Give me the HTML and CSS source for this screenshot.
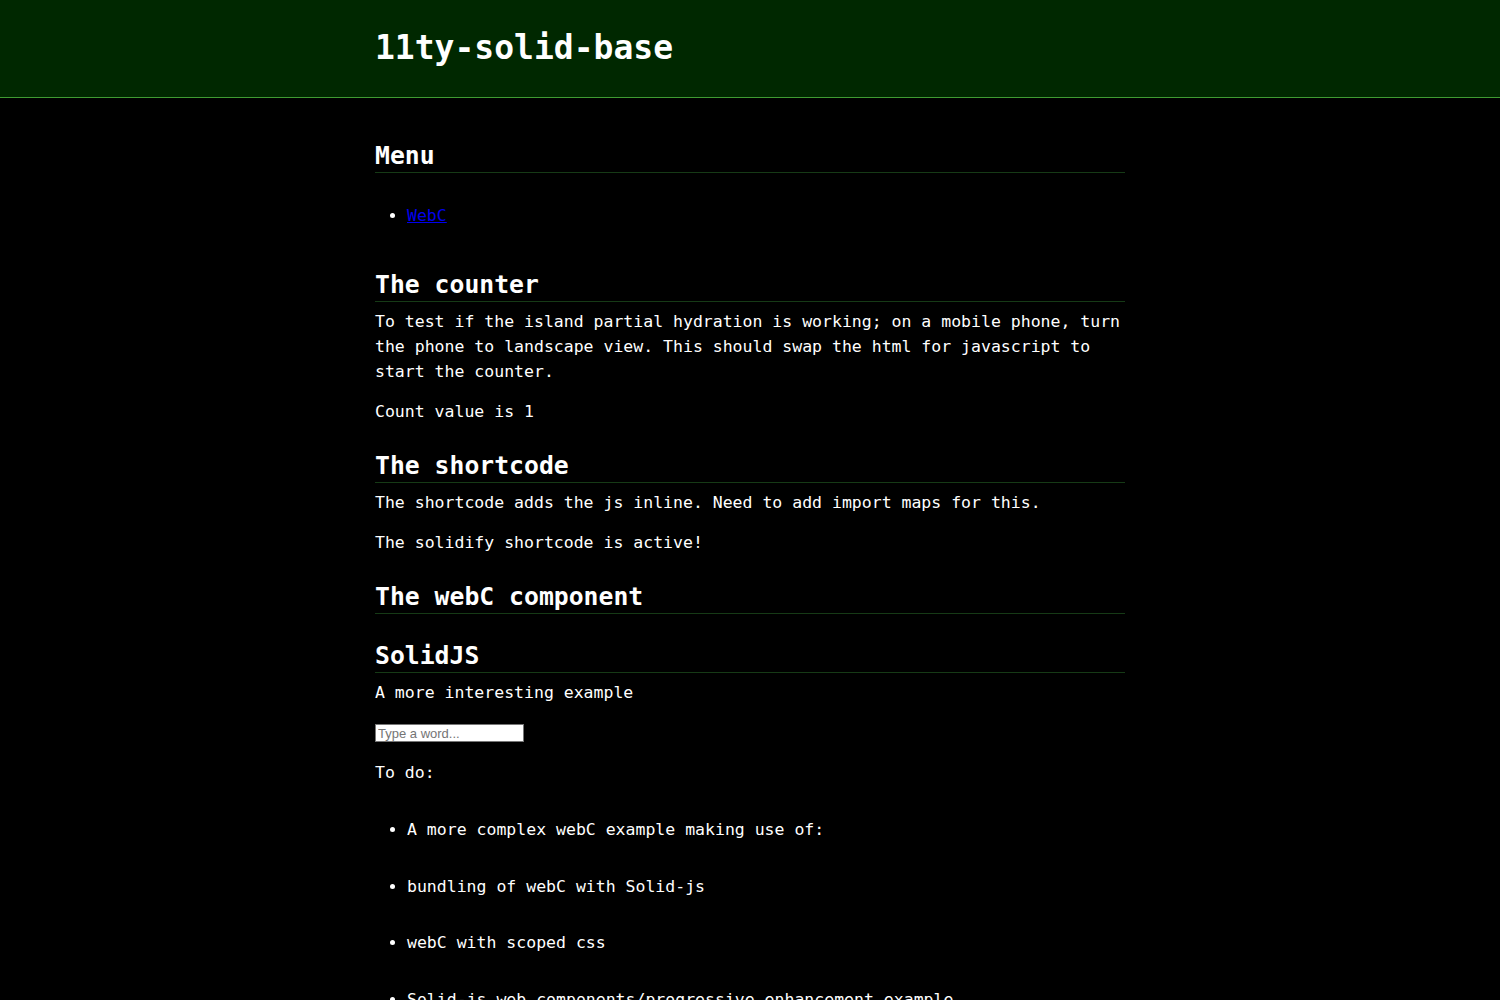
FILE: index.html
```html
<!DOCTYPE html>
<html lang="en">
<head>
<meta charset="utf-8">
<title>11ty-solid-base</title>
<link rel="stylesheet" href="styles.css">
</head>
<body>
<header class="site-header">
  <div class="wrap">
    <h1 class="site-title">11ty-solid-base</h1>
  </div>
</header>
<main class="wrap main">
  <h2 class="section-title">Menu</h2>
  <ul class="menu">
    <li><a href="#">WebC</a></li>
  </ul>

  <h2 class="section-title">The counter</h2>
  <p>To test if the island partial hydration is working; on a mobile phone, turn the phone to landscape view. This should swap the html for javascript to start the counter.</p>
  <p>Count value is 1</p>

  <h2 class="section-title">The shortcode</h2>
  <p>The shortcode adds the js inline. Need to add import maps for this.</p>
  <p>The solidify shortcode is active!</p>

  <h2 class="section-title">The webC component</h2>
  <h2 class="section-title">SolidJS</h2>
  <p>A more interesting example</p>
  <div class="field"><input class="word-input" type="text" placeholder="Type a word..."></div>
  <p>To do:</p>
  <ul class="todo">
    <li>A more complex webC example making use of:</li>
    <li>bundling of webC with Solid-js</li>
    <li>webC with scoped css</li>
    <li>Solid-js web components/progressive enhancement example</li>
  </ul>
</main>
</body>
</html>
```

FILE: styles.css
```css
html, body {
  margin: 0;
  padding: 0;
  background: #000;
}

body {
  color: #fff;
  font-family: "DejaVu Sans Mono", "Liberation Mono", monospace;
  font-size: 16.5px;
  line-height: 25px;
}

.wrap {
  width: 750px;
  margin: 0 auto;
}

.site-header {
  background: #002800;
  border-bottom: 1px solid #3f9b32;
  padding: 28px 0 29px;
}

.site-title {
  margin: 0;
  font-size: 33px;
  line-height: 40px;
  font-weight: bold;
  color: #fff;
}

.main {
  padding-top: 16px;
}

.section-title {
  margin: 27px 0 7px;
  font-size: 24.75px;
  line-height: 30px;
  font-weight: bold;
  padding-bottom: 1px;
  border-bottom: 1px solid #163a16;
}

p {
  margin: 0 0 15px;
}

.menu {
  margin: 30px 0 42px;
  padding-left: 32px;
}

.menu a {
  color: #0000ee;
  text-decoration: underline;
}

.field {
  margin: 0 0 15px;
  height: 25px;
  display: flex;
  align-items: flex-end;
}

.word-input {
  box-sizing: border-box;
  width: 149px;
  height: 18px;
  margin: 0 0 3px;
  padding: 1px 2px;
  border: 1px solid #767676;
  background: #fff;
  font-family: "Liberation Sans", Arial, sans-serif;
  font-size: 13px;
  color: #000;
}

.word-input::placeholder {
  color: #757575;
}

.todo {
  margin: 32px 0 0;
  padding-left: 32px;
}

.todo li {
  margin-bottom: 31.5px;
}
```
